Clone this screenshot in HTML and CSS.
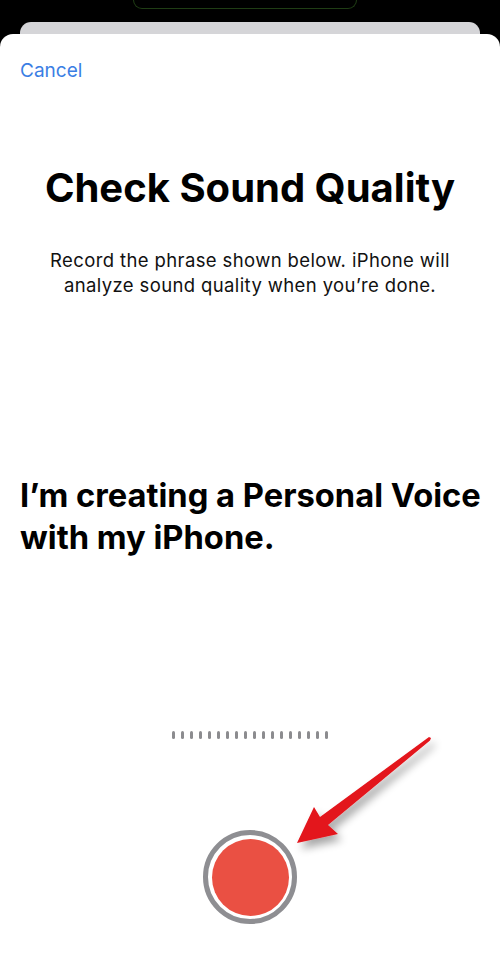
FILE: index.html
```html
<!DOCTYPE html>
<html>
<head>
<meta charset="utf-8">
<link rel="stylesheet" href="styles.css">
</head>
<body>
<div class="screen">
  <div class="island"></div>
  <div class="back-card"></div>
  <div class="sheet">
    <div class="cancel">Cancel</div>
    <h1 class="title">Check Sound Quality</h1>
    <p class="subtitle">Record the phrase shown below. iPhone will<br>analyze sound quality when you’re done.</p>
    <p class="phrase">I’m creating a Personal Voice with my iPhone.</p>
    <div class="meter">
      <span></span><span></span><span></span><span></span><span></span><span></span>
      <span></span><span></span><span></span><span></span><span></span><span></span>
      <span></span><span></span><span></span><span></span><span></span><span></span>
    </div>
    <div class="record-wrap">
      <div class="record"><div class="record-dot"></div></div>
    </div>
  </div>
  <svg class="arrow" width="500" height="958" viewBox="0 0 500 958">
    <defs>
      <filter id="sh" x="-20%" y="-20%" width="150%" height="150%">
        <feGaussianBlur in="SourceAlpha" stdDeviation="4"/>
        <feOffset dx="4" dy="6" result="b"/>
        <feComponentTransfer><feFuncA type="linear" slope="0.35"/></feComponentTransfer>
        <feMerge><feMergeNode/><feMergeNode in="SourceGraphic"/></feMerge>
      </filter>
    </defs>
    <path filter="url(#sh)" fill="#e3141b" d="M431 738 L430 740.5 L328 825 L338 834 L297 843 L314 807 L320 817 L429 737 Z"/>
  </svg>
</div>
</body>
</html>
```
FILE: styles.css
```css
html, body {
  margin: 0;
  padding: 0;
  background: #000;
}
.screen {
  position: relative;
  width: 500px;
  height: 958px;
  overflow: hidden;
  background: #000;
  font-family: Inter, "Noto Sans", sans-serif;
  display: flex;
  flex-direction: column;
}
.island {
  margin-left: 133px;
  width: 222px;
  height: 8px;
  border: 1px solid #1f3d14;
  border-top: none;
  border-radius: 0 0 16px 16px;
  flex: none;
}
.back-card {
  margin: 13px 20px 0;
  height: 12px;
  background: #d5d5d8;
  border-radius: 11px 11px 0 0;
  flex: none;
}
.sheet {
  flex: 1;
  background: #fff;
  border-radius: 13px 13px 0 0;
  padding: 0 20px;
  display: flex;
  flex-direction: column;
}
.cancel {
  margin-top: 25px;
  font-size: 19px;
  line-height: 24px;
  color: #3a7ee4;
}
.title {
  margin: 81px -10px 0;
  text-align: center;
  font-size: 40px;
  line-height: 48px;
  font-weight: 700;
  color: #000;
  white-space: nowrap;
}
.subtitle {
  margin: 36px -10px 0;
  text-align: center;
  font-size: 18.5px;
  line-height: 25px;
  letter-spacing: 0.38px;
  color: #111;
  white-space: nowrap;
}
.phrase {
  margin: 176px -10px 0 0;
  font-size: 32.7px;
  line-height: 42px;
  font-weight: 700;
  color: #000;
}
.meter {
  margin-top: 173px;
  display: flex;
  justify-content: center;
  gap: 6px;
  height: 9px;
}
.meter span {
  width: 3px;
  height: 8px;
  border-radius: 1.5px;
  background: #8c8c8f;
}
.record-wrap {
  margin-top: 90px;
  display: flex;
  justify-content: center;
}
.record {
  width: 84px;
  height: 84px;
  border-radius: 50%;
  border: 5px solid #8e8e92;
  display: flex;
  align-items: center;
  justify-content: center;
}
.record-dot {
  width: 77px;
  height: 77px;
  border-radius: 50%;
  background: #ea5043;
}
.arrow {
  position: absolute;
  left: 0;
  top: 0;
  pointer-events: none;
}
```
